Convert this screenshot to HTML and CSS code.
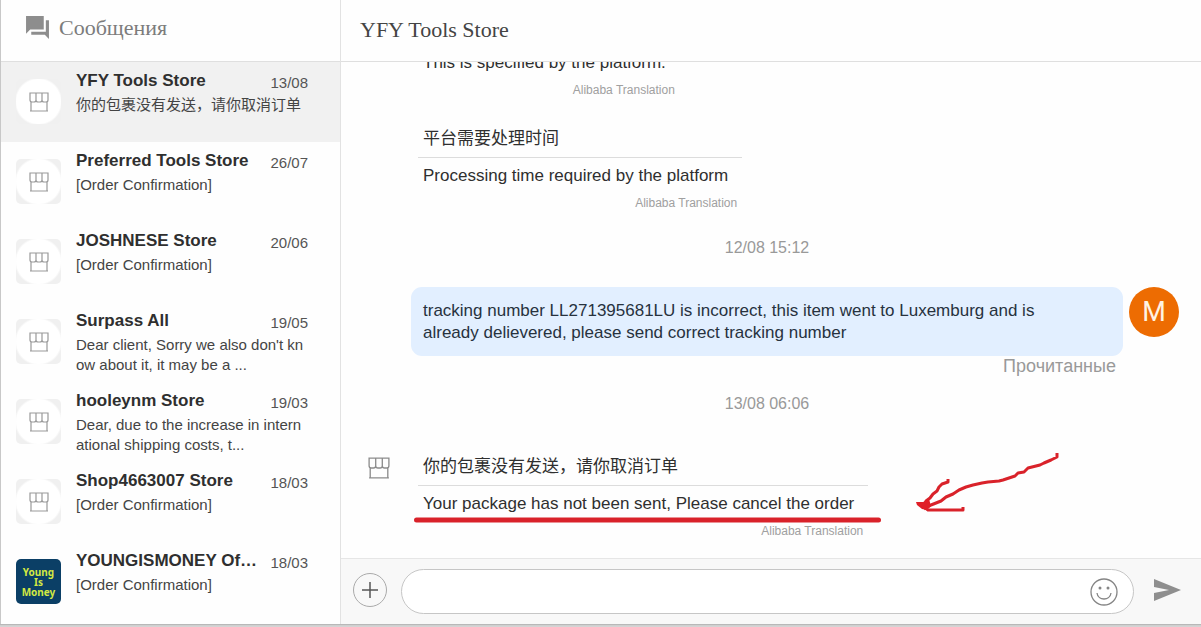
FILE: index.html
```html
<!DOCTYPE html>
<html lang="ru">
<head>
<meta charset="utf-8">
<title>Сообщения</title>
<link rel="stylesheet" href="styles.css">
</head>
<body>
<svg class="defs" aria-hidden="true">
  <symbol id="shop" viewBox="0 0 20 20">
    <path d="M1 1h18v7q0 2-2 2h-2q-2 0-2-2q0 2-2 2H9q-2 0-2-2q0 2-2 2H3q-2 0-2-2zM7 1v7M13 1v7M2 10v9h16v-9M1 19h18" fill="none" stroke="currentColor" stroke-width="1.200"/>
  </symbol>
</svg>
<div class="app">
  <aside class="sidebar">
    <header class="sidebar-head">
      <svg class="chat-icon" viewBox="0 0 24 24" aria-hidden="true"><path d="M1 1h17v13H5l-4 4zM20 5h3v18l-4-4H6v-3h14z" fill="#8d8d8d"/></svg>
      <h1>Сообщения</h1>
    </header>
    <ul class="threads">
      <li class="thread active">
        <span class="avatar"><svg><use href="#shop"/></svg></span>
        <div class="info"><div class="top"><h2>YFY Tools Store</h2><time>13/08</time></div><p>你的包裹没有发送，请你取消订单</p></div>
      </li>
      <li class="thread">
        <span class="avatar"><svg><use href="#shop"/></svg></span>
        <div class="info"><div class="top"><h2>Preferred Tools Store</h2><time>26/07</time></div><p>[Order Confirmation]</p></div>
      </li>
      <li class="thread">
        <span class="avatar"><svg><use href="#shop"/></svg></span>
        <div class="info"><div class="top"><h2>JOSHNESE Store</h2><time>20/06</time></div><p>[Order Confirmation]</p></div>
      </li>
      <li class="thread">
        <span class="avatar"><svg><use href="#shop"/></svg></span>
        <div class="info"><div class="top"><h2>Surpass All</h2><time>19/05</time></div><p>Dear client, Sorry we also don't kn<br>ow about it, it may be a ...</p></div>
      </li>
      <li class="thread">
        <span class="avatar"><svg><use href="#shop"/></svg></span>
        <div class="info"><div class="top"><h2>hooleynm Store</h2><time>19/03</time></div><p>Dear, due to the increase in intern<br>ational shipping costs, t...</p></div>
      </li>
      <li class="thread">
        <span class="avatar"><svg><use href="#shop"/></svg></span>
        <div class="info"><div class="top"><h2>Shop4663007 Store</h2><time>18/03</time></div><p>[Order Confirmation]</p></div>
      </li>
      <li class="thread">
        <span class="avatar brand">Young<br>Is<br>Money</span>
        <div class="info"><div class="top"><h2>YOUNGISMONEY Of…</h2><time>18/03</time></div><p>[Order Confirmation]</p></div>
      </li>
    </ul>
  </aside>
  <main class="chat">
    <header class="chat-head"><h2>YFY Tools Store</h2></header>
    <section class="messages">
      <article class="incoming">
        <p class="translated plain">This is specified by the platform.</p>
        <small>Alibaba Translation</small>
      </article>
      <article class="incoming">
        <p class="original">平台需要处理时间</p>
        <p class="translated">Processing time required by the platform</p>
        <small>Alibaba Translation</small>
      </article>
      <time class="stamp">12/08 15:12</time>
      <article class="outgoing">
        <p class="bubble">tracking number LL271395681LU is incorrect, this item went to Luxemburg and is already delievered, please send correct tracking number</p>
        <span class="me">M</span>
        <span class="status">Прочитанные</span>
      </article>
      <time class="stamp">13/08 06:06</time>
      <article class="incoming last">
        <svg class="sender"><use href="#shop"/></svg>
        <p class="original">你的包裹没有发送，请你取消订单</p>
        <p class="translated">Your package has not been sent, Please cancel the order</p>
        <small>Alibaba Translation</small>
        <svg class="marks" viewBox="0 0 650 74" aria-hidden="true">
          <g fill="none" stroke="#d9222a" stroke-linejoin="round">
            <path d="M2.500 68H464.500" stroke-width="5" stroke-linecap="round"/>
            <path d="M643 1v4l-6 3-7 3-4 2-12 3-4 4-6 1-3 3-12 4-4 1-11 1-6 1-9 2-7 2-7 3-6 4-7 3-5 4-10 4-7 4M534 27v3l-6 2-3 3-2 4-4 3-3 4-4 3-2 5M509 54l5 4h35v-3" stroke-width="3"/>
            <path d="M502 50h7l6-3 2 7-4 4-5-1-5-4z" fill="#e01f27" stroke="none"/>
          </g>
        </svg>
      </article>
    </section>
    <form class="composer">
      <button type="button" class="add" aria-label="Добавить"><svg viewBox="0 0 16 16"><path d="M8 0v16M0 8h16" stroke="#555" stroke-width="1.500"/></svg></button>
      <div class="field">
        <input type="text" aria-label="Сообщение">
        <button type="button" class="smile" aria-label="Смайлик"><svg viewBox="0 0 28 28"><g fill="none" stroke="#858585" stroke-width="1.300"><circle cx="14" cy="14" r="13"/><path d="M7 15c1 8 13 8 14 0"/></g><g fill="#858585"><circle cx="10" cy="10" r="1.500"/><circle cx="18" cy="10" r="1.500"/></g></svg></button>
      </div>
      <button type="submit" class="send" aria-label="Отправить"><svg viewBox="0 0 27 22"><path d="M0 0l27 11L0 22v-8l15-3L0 8z" fill="#8f8f8f"/></svg></button>
    </form>
  </main>
</div>
</body>
</html>
```
FILE: styles.css
```css
* { box-sizing: border-box; }
body {
  margin: 0;
  height: 100vh;
  padding-bottom: 3px;
  background: #d4d4d4;
  color: #2f2f2f;
  font-family: "Liberation Sans", Arial, "Noto Sans CJK SC", sans-serif;
  overflow: hidden;
}
h1, h2, p, ul { margin: 0; padding: 0; }
button { padding: 0; border: 0; background: none; }
svg { display: block; }
.defs { position: absolute; width: 0; height: 0; }
.app {
  display: flex;
  height: 100%;
  background: #fefefe;
  border-left: 1px solid #c8c8c8;
  box-shadow: 0 1px 1px #b8b8b8;
}
.sidebar { flex: 0 0 340px; border-right: 1px solid #e2e2e2; }
.sidebar-head, .chat-head {
  height: 62px;
  display: flex;
  align-items: center;
  border-bottom: 1px solid #dfdfdf;
}
.sidebar-head { padding: 0 24px 6px; gap: 9px; }
.chat-icon { width: 25px; height: 25px; }
.sidebar-head h1, .chat-head h2 {
  font: 22px "Liberation Serif", "Times New Roman", serif;
  color: #7c7c7c;
}
.chat-head { padding: 0 19px 2px; }
.chat-head h2 { color: #444; }
.threads { list-style: none; }
.thread {
  display: flex;
  gap: 15px;
  height: 80px;
  padding: 9px 32px 0 15px;
}
.thread.active { background: #f1f1f1; }
.avatar {
  flex: none;
  width: 45px;
  height: 45px;
  margin-top: 8px;
  border-radius: 5px;
  background: radial-gradient(circle, #fff 22px, #f0f0f0 24px);
  display: grid;
  place-items: center;
  color: #999;
}
.avatar svg { width: 20px; height: 20px; }
.brand {
  background: #0b3f66;
  color: #d3e842;
  font: bold 10px/10px "Noto Sans", sans-serif;
  text-align: center;
}
.info { flex: 1; min-width: 0; }
.top { display: flex; justify-content: space-between; }
.top h2 { font-size: 17px; line-height: 20px; white-space: nowrap; }
.top time { font-size: 15px; line-height: 24px; color: #555; }
.info p { font-size: 15px; line-height: 20px; color: #444; white-space: nowrap; }
.chat { flex: 1; min-width: 0; display: flex; flex-direction: column; }
.messages {
  flex: 1;
  min-height: 0;
  overflow: hidden;
  display: flex;
  flex-direction: column;
  justify-content: flex-end;
  align-items: flex-start;
  padding: 0 78px 19px 70px;
  font-size: 17px;
  line-height: 22px;
}
.incoming {
  position: relative;
  flex: none;
  margin: 0 0 30px 7px;
  display: flex;
  flex-direction: column;
}
.original { padding: 0 14px 7px 5px; }
.translated { padding: 7px 14px 0 5px; border-top: 1px solid #dcdcdc; }
.translated.plain { border-top: 0; }
.incoming small {
  align-self: flex-end;
  margin-top: 8px;
  padding-right: 5px;
  font-size: 12px;
  line-height: 16px;
  color: #a0a0a0;
}
.stamp {
  flex: none;
  align-self: center;
  font-size: 16px;
  line-height: 20px;
  color: #999;
}
.incoming + .stamp { margin-top: -3px; }
.outgoing {
  position: relative;
  flex: none;
  align-self: stretch;
  margin: 29px 0 18px;
  display: flex;
  flex-direction: column;
}
.bubble {
  padding: 13px 40px 12px 12px;
  border-radius: 11px;
  background: #e2efff;
  color: #27323e;
}
.me {
  position: absolute;
  right: -56px;
  top: 0;
  width: 50px;
  height: 50px;
  border-radius: 50%;
  background: #ed6c02;
  color: #fff3e3;
  font: 27px/50px Roboto, sans-serif;
  text-align: center;
}
.status { align-self: flex-end; padding-right: 7px; line-height: 20px; color: #999; font-size: 18px; }
.incoming.last { margin-top: 42px; margin-bottom: 0; }
.sender { position: absolute; left: -50px; top: 1px; width: 22px; height: 22px; color: #8c8c8c; }
.marks { position: absolute; left: -4px; top: -4px; width: 650px; height: 74px; overflow: visible; }
.composer {
  flex: none;
  display: flex;
  align-items: center;
  height: 66px;
  padding: 0 20px 0 12px;
  border-top: 1px solid #e6e6e6;
  background: #f8f8f8;
}
.add {
  width: 34px;
  height: 34px;
  margin: 0 14px 4px 0;
  border: 1px solid #aaa;
  border-radius: 50%;
  display: grid;
  place-items: center;
}
.add svg { width: 16px; height: 16px; }
.field {
  flex: 1;
  height: 45px;
  display: flex;
  align-items: center;
  padding: 0 15px 0 22px;
  border: 1px solid #c6c6c6;
  border-radius: 23px;
  background: #fff;
}
.field input { flex: 1; min-width: 0; border: 0; outline: 0; background: none; font: inherit; }
.smile, .smile svg { width: 28px; height: 28px; }
.send { margin: 0 0 4px 20px; }
.send svg { width: 27px; height: 22px; }
```
